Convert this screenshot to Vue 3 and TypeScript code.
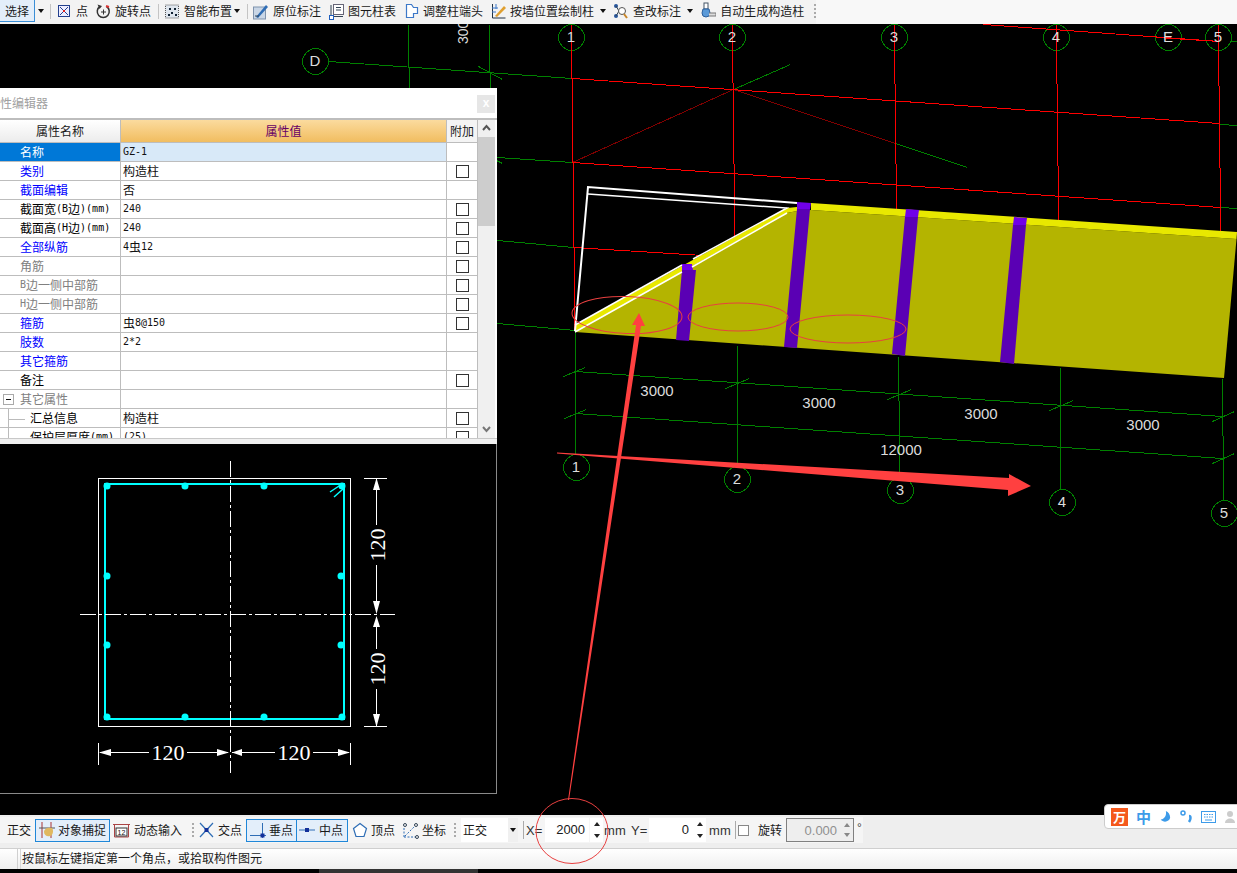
<script setup lang="ts">
type Seg = [number, number, number, number]

interface Row {
  name: string
  value?: string
  color?: 'blue' | 'gray' | 'white'
  check?: boolean
  selected?: boolean
  group?: boolean
  child?: boolean
}

const rows: Row[] = [
  { name: '名称', value: 'GZ-1', color: 'white', selected: true },
  { name: '类别', value: '构造柱', color: 'blue', check: true },
  { name: '截面编辑', value: '否', color: 'blue' },
  { name: '截面宽(B边)(mm)', value: '240', check: true },
  { name: '截面高(H边)(mm)', value: '240', check: true },
  { name: '全部纵筋', value: '4虫12', color: 'blue', check: true },
  { name: '角筋', color: 'gray', check: true },
  { name: 'B边一侧中部筋', color: 'gray', check: true },
  { name: 'H边一侧中部筋', color: 'gray', check: true },
  { name: '箍筋', value: '虫8@150', color: 'blue', check: true },
  { name: '肢数', value: '2*2', color: 'blue' },
  { name: '其它箍筋', color: 'blue' },
  { name: '备注', check: true },
  { name: '其它属性', color: 'gray', group: true },
  { name: '汇总信息', value: '构造柱', child: true, check: true },
  { name: '保护层厚度(mm)', value: '(25)', child: true, check: true },
]

function runs(s: string) {
  const out: { t: string; latin: boolean }[] = []
  for (const ch of s) {
    const latin = ch.charCodeAt(0) < 128
    const last = out[out.length - 1]
    if (last && last.latin === latin) last.t += ch
    else out.push({ t: ch, latin })
  }
  return out
}

function ring(cx: number, cy: number, r: number) {
  const pts: string[] = []
  for (let i = 0; i < 12; i++) {
    const a = (Math.PI * 2 * i) / 12 + 0.26
    pts.push(`${(cx + r * Math.cos(a)).toFixed(1)},${(cy + r * Math.sin(a)).toFixed(1)}`)
  }
  return pts.join(' ')
}

const bubbles = [
  { x: 315, y: 61, t: 'D' },
  { x: 571, y: 37, t: '1' },
  { x: 732, y: 37, t: '2' },
  { x: 894, y: 37, t: '3' },
  { x: 1056, y: 37, t: '4' },
  { x: 1168, y: 37, t: 'E' },
  { x: 1218, y: 37, t: '5' },
  { x: 576, y: 467, t: '1' },
  { x: 737, y: 479, t: '2' },
  { x: 900, y: 490, t: '3' },
  { x: 1062, y: 502, t: '4' },
  { x: 1224, y: 513, t: '5' },
]

const green: Seg[] = [
  [328, 61, 572, 78],
  [408, 24, 408, 67],
  [409, 67, 409, 88],
  [489, 24, 489, 72],
  [490, 72, 490, 88],
  [478, 66, 502, 79],
  [497, 157, 572, 162],
  [492, 158, 502, 163],
  [497, 240, 573, 247],
  [497, 323, 575, 330],
  [733, 89, 790, 64],
  [895, 143, 967, 167],
  [1219, 41, 1237, 41],
  [1219, 124, 1237, 125],
  [1220, 207, 1237, 208],
  [575, 331, 575, 454],
  [737, 345, 737, 466],
  [898, 356, 898, 400],
  [899, 400, 899, 477],
  [1060, 367, 1060, 489],
  [1222, 378, 1222, 435],
  [1223, 435, 1223, 500],
  [575, 371, 1222, 416],
  [575, 413, 1222, 458],
  [563, 376, 585, 367],
  [725, 388, 749, 378],
  [887, 399, 911, 389],
  [1049, 410, 1073, 400],
  [1212, 421, 1234, 411],
  [564, 418, 586, 409],
  [1212, 463, 1234, 453],
]

const red: Seg[] = [
  [572, 78, 1219, 123],
  [572, 162, 1220, 207],
  [573, 247, 703, 255],
  [983, 24, 1219, 41],
  [1156, 37, 1219, 41],
  [571, 24, 571, 78],
  [572, 78, 572, 162],
  [573, 162, 573, 247],
  [574, 247, 574, 330],
  [732, 24, 732, 82],
  [733, 82, 733, 163],
  [734, 163, 734, 240],
  [894, 24, 894, 83],
  [895, 83, 895, 163],
  [896, 163, 896, 210],
  [1056, 24, 1056, 83],
  [1057, 83, 1057, 165],
  [1058, 165, 1058, 220],
  [1218, 24, 1218, 85],
  [1219, 85, 1219, 167],
  [1220, 167, 1220, 231],
]

const dims = [
  { x: 657, y: 390, t: '3000' },
  { x: 819, y: 402, t: '3000' },
  { x: 981, y: 413, t: '3000' },
  { x: 1143, y: 424, t: '3000' },
  { x: 901, y: 449, t: '12000' },
]

const columns = [
  { top: '682,264 692,264 693,270 682,270', body: '682,270 696,270 689,341 676,340' },
  { top: '797,202 811,203 810,209 797,209', body: '797,209 810,209 797,348 784,347' },
  { top: '906,209 919,210 918,217 905,217', body: '905,217 918,217 905,356 892,354' },
  { top: '1014,217 1027,218 1026,225 1013,225', body: '1013,225 1026,225 1014,364 1000,362' },
]

const rebars: [number, number][] = [
  [107, 486], [185, 486], [264, 486], [342, 486],
  [107, 576], [341, 576], [107, 645], [341, 645],
  [107, 717], [185, 717], [264, 717], [342, 717],
]
</script>

<template>
  <div class="app">
    <!-- top toolbar -->
    <div class="tb">
      <div class="select">选择</div>
      <span class="caret c12"></span>
      <span class="sep s1"></span>
      <div class="it g6 m8">
        <svg width="12" height="14" viewBox="0 0 12 14"><rect x=".5" y="1.5" width="11" height="11" fill="#eef" stroke="#23408e"/><path d="M2 3l8 8M10 3l-8 8" stroke="#23408e"/><rect x="5" y="6" width="2" height="2" fill="#d22"/></svg>
        <span>点</span>
      </div>
      <div class="it g4">
        <svg width="15" height="16" viewBox="0 0 15 16"><path d="M4 3.500a6 6 0 1 0 6.500 0" fill="none" stroke="#333" stroke-width="1.500"/><path d="M1.500 1.500L6 3 3.500 6z" fill="#333"/><path d="M10 3l3 1" stroke="#d33" stroke-width="2"/><path d="M7.500 6.500v5M5 9h5" stroke="#333"/></svg>
        <span>旋转点</span>
      </div>
      <span class="sep s2"></span>
      <div class="it g5">
        <svg width="14" height="15" viewBox="0 0 14 15"><rect x=".5" y="1" width="13" height="13" fill="#dfe6ee" stroke="#555" stroke-dasharray="1 1"/><path d="M4 4h2v2H4zM9 4h2v2H9zM6 8h2v2H6zM3 10h2v2H3zM10 10h2v2h-2z" fill="#123"/></svg>
        <span>智能布置</span>
      </div>
      <span class="caret c10"></span>
      <span class="sep s3"></span>
      <div class="it g5 m8">
        <svg width="15" height="17" viewBox="0 0 15 17"><rect x=".5" y="4" width="12" height="12" fill="#c9d6e6" stroke="#7f93ad"/><path d="M3 14L13 2l2 2L5 15z" fill="#2f6db5"/><path d="M2 13h4" stroke="#345"/></svg>
        <span>原位标注</span>
      </div>
      <div class="it g4 m8">
        <svg width="15" height="17" viewBox="0 0 15 17"><rect x="4.500" y="1.500" width="10" height="10" fill="#fff" stroke="#667"/><path d="M7 4.500h5M7 7h5M4 13.500h10" stroke="#345"/><rect x=".5" y="12.500" width="4" height="4" fill="#fff" stroke="#1f5fbf"/><path d="M2 2v10" stroke="#345"/></svg>
        <span>图元柱表</span>
      </div>
      <div class="it g4 m8">
        <svg width="15" height="16" viewBox="0 0 15 16"><path d="M2.500 1.500h5l2 3h4v6h-4v4h-7z" fill="#fff" stroke="#3c78c8" stroke-width="1.200"/></svg>
        <span>调整柱端头</span>
      </div>
      <div class="it g4">
        <svg width="15" height="17" viewBox="0 0 15 17"><path d="M1.500 1v14h13" fill="none" stroke="#234"/><path d="M1 5h6M1 9h4M5 1v5" stroke="#3c78c8"/><path d="M4 13L13 3l2 2-9 9z" fill="#e0a030"/></svg>
        <span>按墙位置绘制柱</span>
      </div>
      <span class="caret c10 ml4"></span>
      <div class="it g5 ml5">
        <svg width="15" height="17" viewBox="0 0 15 17"><circle cx="3" cy="3" r="2" fill="#27569c"/><circle cx="3" cy="13" r="2" fill="#27569c"/><path d="M3 3l3 5-3 5" fill="none" stroke="#345"/><circle cx="9" cy="8" r="3.500" fill="#fff" stroke="#555"/><path d="M11 11l3 4" stroke="#c8862a" stroke-width="2"/></svg>
        <span>查改标注</span>
      </div>
      <span class="caret c10 ml4"></span>
      <div class="it g4 ml5">
        <svg width="16" height="18" viewBox="0 0 16 18"><rect x="4" y="1" width="4" height="6" fill="#fff" stroke="#456"/><path d="M3 7h6l1 4a4 4 0 1 1-8 0z" fill="#5b9ad8" stroke="#2b5f9c"/><path d="M9 11h7v3H9" fill="#ddd" stroke="#777"/></svg>
        <span>自动生成构造柱</span>
      </div>
      <span class="grip ml10"></span>
    </div>

    <!-- drawing area -->
    <div class="canvas">
      <svg class="model" width="1237" height="791" viewBox="0 24 1237 791">
        <g class="crisp" transform="translate(.5 .5)">
          <line v-for="(l, i) in green" :key="'g' + i" :x1="l[0]" :y1="l[1]" :x2="l[2]" :y2="l[3]" stroke="#008000" />
          <polygon v-for="b in bubbles" :key="b.t + b.y" :points="ring(b.x, b.y, 13)" fill="#000" stroke="#008000" />
          <line x1="572" y1="162" x2="733" y2="89" stroke="#7f0000" />
          <line x1="733" y1="89" x2="895" y2="143" stroke="#7f0000" />
          <line v-for="(l, i) in red" :key="'r' + i" :x1="l[0]" :y1="l[1]" :x2="l[2]" :y2="l[3]" stroke="#ff0000" />
        </g>
        <text v-for="b in bubbles" :key="'t' + b.t + b.y" class="cad" :x="b.x" :y="b.y + 5" text-anchor="middle" font-size="15">{{ b.t }}</text>
        <text class="cad" transform="translate(468 44) rotate(-90)" font-size="14">3000</text>
        <text v-for="d in dims" :key="d.x" class="cad" :x="d.x" :y="d.y + 6" text-anchor="middle" font-size="15">{{ d.t }}</text>

        <polygon points="575,332 787,213 797,211 811,210 1236.500,239 1224,378" fill="#b4b400" />
        <polygon points="811,203 1237,232 1236.500,239 811,210" fill="#e8e800" />
        <polygon points="575,325 787,208 797,207 797,211 787,213 575,332" fill="#e8e800" />
        <g v-for="(c, i) in columns" :key="i">
          <polygon :points="c.body" fill="#5a00b4" />
          <polygon :points="c.top" fill="#7000e8" />
        </g>
        <g fill="none" stroke="#fff" stroke-width="1.500">
          <polyline points="575,331 588,187 797,203" stroke-width="2" />
          <polyline points="575,325 682,265" />
          <polyline points="693,259 787,208 588,194" />
          <line x1="575" y1="332" x2="682" y2="272" />
          <line x1="692" y1="267" x2="787" y2="213" />
        </g>
      </svg>

      <!-- property editor window -->
      <div class="panel">
        <div class="title">
          <span class="title-text">属性编辑器</span>
          <span class="close">x</span>
        </div>
        <div class="sheet">
          <div class="grid">
            <div class="head h-name">属性名称</div>
            <div class="head h-value">属性值</div>
            <div class="head h-add">附加</div>
            <div class="body">
              <div v-for="r in rows" :key="r.name" class="row">
                <div class="c-name" :class="[r.color, { sel: r.selected, child: r.child, grp: r.group }]">
                  <span v-if="r.group" class="tree-box"></span>
                  <template v-if="r.child"><span class="tree-v"></span><span class="tree-h"></span></template>
                  <span v-for="(p, i) in runs(r.name)" :key="i" :class="{ latin: p.latin }">{{ p.t }}</span>
                </div>
                <div class="c-value" :class="{ sel: r.selected }">
                  <span v-for="(p, i) in runs(r.value ?? '')" :key="i" :class="{ latin: p.latin }">{{ p.t }}</span>
                </div>
                <div class="c-add"><span v-if="r.check" class="box"></span></div>
              </div>
            </div>
          </div>
          <div class="vscroll">
            <svg class="chev" width="17" height="17" viewBox="0 0 17 17"><path d="M5 10l3.500-4L12 10" fill="none" stroke="#555" stroke-width="2"/></svg>
            <div class="thumb"></div>
            <div class="track"></div>
            <svg class="chev" width="17" height="17" viewBox="0 0 17 17"><path d="M5 6l3.500 4L12 6" fill="none" stroke="#777" stroke-width="2"/></svg>
          </div>
        </div>
        <div class="foot"></div>
        <div class="preview">
          <svg width="496" height="349" viewBox="0 444 496 349">
            <rect x="98.500" y="478.500" width="252" height="248" fill="none" stroke="#fff" />
            <rect x="105" y="484" width="239" height="235" fill="none" stroke="#00ffff" stroke-width="2" />
            <circle v-for="(d, i) in rebars" :key="i" :cx="d[0]" :cy="d[1]" r="3.500" fill="#00ffff" />
            <path d="M330 492l9-6M334 497l9-8" stroke="#00ffff" stroke-width="1.500" />
            <g stroke="#fff" fill="none">
              <line x1="230.500" y1="461" x2="230.500" y2="773" stroke-dasharray="16 3 3 3" />
              <line x1="80" y1="614.500" x2="395" y2="614.500" stroke-dasharray="16 3 3 3" />
              <path d="M364 478.500h23M364 726.500h23M376.500 478v47M376.500 565v36M376.500 627v22M376.500 689v38" />
              <path d="M98.500 743v22M350.500 743v22M100 752.500h49M187 752.500h41M232 752.500h43M313 752.500h36" />
            </g>
            <g fill="#fff">
              <path d="M376.500 478l-3.500 12h7zM376.500 614l-3.500-13h7zM376.500 616l-3.500 11h7zM376.500 727l-3.500-13h7z" />
              <path d="M99 752.500l12-3.500v7zM229 752.500l-12-3.500v7zM232 752.500l10-3.500v7zM350 752.500l-12-3.500v7z" />
            </g>
            <g class="num" fill="#fff" font-size="22">
              <text x="168" y="760" text-anchor="middle">120</text>
              <text x="294" y="760" text-anchor="middle">120</text>
              <text transform="translate(385 545) rotate(-90)" text-anchor="middle">120</text>
              <text transform="translate(385 669) rotate(-90)" text-anchor="middle">120</text>
            </g>
          </svg>
        </div>
      </div>
    </div>

    <!-- lower toolbar -->
    <div class="bt">
      <div class="seg">
        <div class="it b-first"><span>正交</span></div>
        <div class="toggle snap">
          <svg width="16" height="18" viewBox="0 0 16 18"><path d="M3 1v16M12 1v16" stroke="#a33"/><path d="M0 7h16" stroke="#555"/><path d="M5 11c0-4 5-5 8-4 2 2 1 8-2 8-3 1-6-1-6-4z" fill="#e0b860"/></svg>
          <span>对象捕捉</span>
        </div>
        <div class="it g4 ml3">
          <svg width="17" height="16" viewBox="0 0 17 16"><path d="M0 2.500h17M1.500 2v13h14V2" fill="none" stroke="#a44"/><rect x="3" y="6" width="11" height="8" fill="#fff" stroke="#333"/><text x="8.500" y="13" text-anchor="middle" font-size="7" font-family="Liberation Sans" fill="#111">12</text></svg>
          <span>动态输入</span>
        </div>
        <span class="grip ml10"></span>
        <div class="it g4 ml5">
          <svg width="15" height="16" viewBox="0 0 15 16"><path d="M1 1l13 14M14 1L1 15" stroke="#2e6db5" stroke-width="1.200"/><rect x="5.500" y="6" width="4" height="4" fill="#13309a"/></svg>
          <span>交点</span>
        </div>
        <div class="toggle t-first ml4">
          <svg width="16" height="16" viewBox="0 0 16 16"><path d="M0 13.500h16M12.500 1v15" stroke="#2e6db5"/><rect x="10.500" y="11.500" width="4" height="4" fill="#13309a"/></svg>
          <span>垂点</span>
        </div>
        <div class="toggle t-second">
          <svg width="16" height="16" viewBox="0 0 16 16"><path d="M0 8h16" stroke="#2e6db5"/><rect x="6" y="6" width="4" height="4" fill="#13309a"/></svg>
          <span>中点</span>
        </div>
        <div class="it g3 ml4">
          <svg width="16" height="16" viewBox="0 0 16 16"><path d="M8 1.500l6.500 5-2.500 8H4l-2.500-8z" fill="#fff" stroke="#2e6db5" stroke-width="1.200"/></svg>
          <span>顶点</span>
        </div>
        <div class="it g3 ml7">
          <svg width="17" height="17" viewBox="0 0 17 17"><path d="M2 15L2 5M2 15h12M3 14l9-9" stroke="#2e6db5" stroke-dasharray="2 1.500"/><circle cx="3" cy="3" r="1.500" fill="none" stroke="#345"/><circle cx="14" cy="3" r="1.500" fill="none" stroke="#345"/><circle cx="15" cy="15" r="1.500" fill="none" stroke="#345"/></svg>
          <span>坐标</span>
        </div>
        <span class="grip ml8"></span>
        <div class="combo ml5"><span class="combo-text">正交</span><span class="combo-btn"><span class="caret c10"></span></span></div>
        <span class="vline ml5"></span>
        <span class="lbl w16 ml2">X=</span>
        <span class="num-in ml3">2000</span>
        <span class="spin ml1"><i class="up"></i><i class="dn"></i></span>
        <span class="lbl w23 ml1">mm</span>
        <span class="lbl w16 ml4">Y=</span>
        <span class="num-in ml2">0</span>
        <span class="spin"><i class="up"></i><i class="dn"></i></span>
        <span class="lbl w21 ml3">mm</span>
        <span class="vline ml5"></span>
        <span class="chk ml2"></span>
        <span class="it ml9">旋转</span>
        <div class="rot ml4">
          <span class="rot-val">0.000</span>
          <span class="spin gray"><i class="up"></i><i class="dn"></i></span>
        </div>
        <span class="deg">°</span>
      </div>
    </div>

    <!-- status bar -->
    <div class="status">
      <div class="st-cell"></div>
      <div class="st-msg">按鼠标左键指定第一个角点，或拾取构件图元</div>
    </div>
    <div class="tail"><span class="tail-dark"></span></div>

    <!-- hand-drawn annotations sit over everything -->
    <svg class="annot" width="1237" height="873" viewBox="0 0 1237 873">
      <g fill="none" stroke="#e84040">
        <ellipse cx="627" cy="315" rx="55" ry="18.500" transform="rotate(2 627 315)" />
        <ellipse cx="738" cy="317" rx="50" ry="14" />
        <ellipse cx="848" cy="329" rx="58" ry="14" />
        <ellipse cx="572" cy="831" rx="36" ry="32.500" />
      </g>
      <polygon points="568,800 636,325 632,325 639,313 645,326 641,326 569,800" fill="#ff4040" />
      <polygon points="557,452.500 1009,478 1009,474 1031,486 1008,496 1008,490 557,453.500" fill="#ff4040" />
    </svg>

    <!-- input-method bar -->
    <div class="ime">
      <span class="ime-logo">万</span>
      <span class="ime-zh">中</span>
      <svg width="12" height="16" viewBox="0 0 14 16"><path d="M8 1c1 5-1 9-6 10 3 4 10 3 11-2 0-4-2-7-5-8z" fill="#3d9be9"/></svg>
      <svg width="14" height="16" viewBox="0 0 14 16"><circle cx="4" cy="4" r="2" fill="none" stroke="#3d9be9" stroke-width="1.500"/><path d="M10 7c2 0 2 3 0 6" fill="none" stroke="#3d9be9" stroke-width="2.500"/></svg>
      <svg width="15" height="14" viewBox="0 0 15 14"><rect x=".5" y="1.500" width="14" height="11" fill="none" stroke="#3d9be9"/><path d="M3 4.500h9M3 7h9" stroke="#3d9be9" stroke-dasharray="1.500 1"/><path d="M4 10h7" stroke="#3d9be9"/></svg>
      <svg width="12" height="14" viewBox="0 0 12 14"><circle cx="6" cy="4" r="3" fill="#ccc"/><path d="M1 13c0-6 10-6 10 0z" fill="#ccc"/></svg>
    </div>
  </div>
</template>

<style scoped>
.app {
  position: relative;
  display: flex;
  flex-direction: column;
  width: 1237px;
  height: 873px;
  overflow: hidden;
  background: #000;
  color: #1a1a1a;
  font-family: "Noto Sans CJK SC", "Liberation Sans", sans-serif;
  font-size: 12px;
  line-height: 1;
}
.crisp { shape-rendering: crispEdges; }
.tb {
  display: flex;
  align-items: center;
  flex: none;
  box-sizing: border-box;
  height: 24px;
  padding-bottom: 2px;
  background: linear-gradient(90deg, #f3f3f3 0, #f3f3f3 816px, #f8f8f8 816px);
}
.it { display: flex; align-items: center; flex: none; white-space: nowrap; }
.g3 { gap: 3px; } .g4 { gap: 4px; } .g5 { gap: 5px; } .g6 { gap: 6px; }
.m8 { margin-right: 8px; }
.ml1 { margin-left: 1px; } .ml2 { margin-left: 2px; } .ml3 { margin-left: 3px; }
.ml4 { margin-left: 4px; } .ml5 { margin-left: 5px; } .ml7 { margin-left: 7px; }
.ml8 { margin-left: 8px; } .ml9 { margin-left: 9px; } .ml10 { margin-left: 10px; }
.select {
  display: flex;
  align-items: center;
  justify-content: center;
  box-sizing: border-box;
  width: 35px;
  height: 22px;
  background: #e3eefa;
  border: 1px solid #3a8ed6;
  border-left: 0;
  border-top: 0;
}
.caret { position: relative; display: inline-block; flex: none; height: 10px; }
.caret::after {
  content: "";
  position: absolute;
  top: 3px;
  left: 50%;
  margin-left: -3px;
  border: 3px solid transparent;
  border-top: 4px solid #111;
  border-bottom: 0;
}
.c12 { width: 11px; } .c10 { width: 10px; }
.sep { flex: none; width: 1px; height: 15px; background: #c4c4c4; }
.s1 { margin: 0 7px 0 4px; }
.s2 { margin: 0 6px 0 7px; }
.s3 { margin: 0 5px; }
.grip {
  flex: none;
  width: 2px;
  height: 15px;
  background: repeating-linear-gradient(180deg, #aaa 0 2px, transparent 2px 4px);
}
.canvas { position: relative; flex: none; height: 791px; overflow: hidden; background: #000; }
.model { position: absolute; left: 0; top: 0; }
.cad { fill: #dcdcdc; font-family: "Liberation Sans", sans-serif; }
.num { font-family: "Liberation Serif", serif; }

.panel {
  position: absolute;
  left: 0;
  top: 64px;
  display: flex;
  flex-direction: column;
  width: 497px;
}
.title { position: relative; flex: none; height: 30px; background: #fff; }
.title-text { position: absolute; left: -12px; top: 9px; color: #a0a0a0; }
.close {
  position: absolute;
  right: 2px;
  top: 7px;
  width: 18px;
  height: 18px;
  background: #e6e6e6;
  color: #fff;
  text-align: center;
  line-height: 17px;
  font-weight: 700;
  font-family: "Liberation Sans", sans-serif;
}
.sheet {
  display: flex;
  flex: none;
  height: 320px;
  box-sizing: border-box;
  border-top: 2px solid #bdbdbd;
  background: #fff;
}
.grid {
  display: grid;
  grid-template-columns: 121px 326px 31px;
  grid-template-rows: 23px 1fr;
  width: 478px;
  overflow: hidden;
  background: #fff;
}
.head {
  display: flex;
  align-items: center;
  justify-content: center;
  box-sizing: border-box;
  border-right: 1px solid #bdbdbd;
  border-bottom: 1px solid #bdbdbd;
  font-size: 12px;
}
.h-name { background: linear-gradient(180deg, #fff, #ececec); }
.h-value { background: linear-gradient(180deg, #fbdb9e, #f1bd60); color: #660066; }
.h-add { background: #f4f4f4; }
.body { grid-column: 1 / 4; overflow: hidden; }
.row {
  display: grid;
  grid-template-columns: 121px 326px 31px;
  height: 19px;
}
.row > div {
  display: flex;
  align-items: center;
  box-sizing: border-box;
  border-right: 1px solid #bdbdbd;
  border-bottom: 1px solid #bdbdbd;
  white-space: nowrap;
}
.c-name { position: relative; padding-left: 20px; color: #000; }
.c-name.child { padding-left: 30px; }
.c-name.blue { color: #0000ff; }
.c-name.gray { color: #808080; }
.c-name.white { color: #fff; }
.c-name.sel { background: #0078d7; }
.c-value { padding-left: 2px; color: #111; }
.c-value.sel { background: #d8e9f8; }
.c-add { justify-content: center; }
.latin { font-family: "DejaVu Sans Mono", monospace; font-size: 10px; }
.box { display: block; box-sizing: border-box; width: 13px; height: 13px; margin-left: 1px; border: 1px solid #333; background: #fff; }
.tree-box {
  position: absolute;
  left: 3px;
  top: 4px;
  box-sizing: border-box;
  width: 11px;
  height: 11px;
  border: 1px solid #aaa;
  background: linear-gradient(#111, #111) center / 5px 1px no-repeat #fff;
}
.tree-v { position: absolute; left: 8px; top: 0; width: 1px; height: 19px; background: #bbb; }
.tree-h { position: absolute; left: 8px; top: 10px; width: 17px; height: 1px; background: #bbb; }
.vscroll {
  display: flex;
  flex-direction: column;
  flex: none;
  width: 17px;
  background: #f0f0f0;
}
.chev { flex: none; }
.thumb { flex: none; height: 89px; background: #cdcdcd; }
.track { flex: 1; }
.foot {
  flex: none;
  height: 6px;
  box-sizing: border-box;
  border-top: 1px solid #c8c8c8;
  background: #f0f0f0;
}
.preview {
  flex: none;
  height: 350px;
  box-sizing: border-box;
  border-right: 1px solid #8a8a8a;
  border-bottom: 1px solid #8a8a8a;
  background: #000;
}
.preview svg { display: block; }

.bt {
  flex: none;
  height: 33px;
  box-sizing: border-box;
  padding-top: 2px;
  background: #eeeeee;
}
.seg {
  display: flex;
  align-items: center;
  width: 863px;
  height: 26px;
  background: #f5f5f5;
}
.b-first { padding-left: 7px; }
.toggle {
  display: flex;
  align-items: center;
  flex: none;
  box-sizing: border-box;
  height: 23px;
  background: #e3eefa;
  border: 1px solid #1f87d8;
}
.snap { gap: 3px; width: 75px; margin-left: 4px; padding-left: 3px; }
.t-first { gap: 3px; width: 51px; padding-left: 3px; }
.t-second { gap: 4px; width: 51px; padding-left: 2px; border-left: 0; }
.combo {
  display: flex;
  align-items: center;
  flex: none;
  width: 57px;
  height: 24px;
  background: #fff;
}
.combo-text { flex: 1; padding-left: 2px; }
.combo-btn { display: flex; align-items: center; width: 10px; height: 24px; background: #f0f0f0; }
.vline { flex: none; width: 1px; height: 18px; background: #aaa; }
.lbl { flex: none; font-family: "Liberation Sans", sans-serif; font-size: 13px; color: #333; }
.w16 { width: 16px; } .w21 { width: 21px; } .w23 { width: 23px; }
.num-in {
  flex: none;
  box-sizing: border-box;
  width: 44px;
  height: 24px;
  padding-right: 4px;
  background: #fff;
  font-family: "Liberation Sans", sans-serif;
  font-size: 13px;
  line-height: 24px;
  text-align: right;
}
.spin {
  display: flex;
  flex-direction: column;
  align-items: center;
  justify-content: space-around;
  flex: none;
  width: 13px;
  height: 24px;
  background: #fff;
}
.spin i { display: block; border: 3px solid transparent; }
.spin .up { border-top: 0; border-bottom: 4px solid #222; }
.spin .dn { border-bottom: 0; border-top: 4px solid #222; }
.spin.gray { height: 20px; background: transparent; }
.spin.gray .up { border-bottom-color: #888; }
.spin.gray .dn { border-top-color: #888; }
.chk { flex: none; box-sizing: border-box; width: 11px; height: 11px; border: 1px solid #888; background: #fff; }
.rot {
  display: flex;
  align-items: center;
  flex: none;
  box-sizing: border-box;
  width: 68px;
  height: 24px;
  border: 1px solid #808080;
  background: #eeeeee;
}
.rot-val {
  flex: 1;
  padding-right: 3px;
  color: #909090;
  font-family: "Liberation Sans", sans-serif;
  font-size: 13px;
  text-align: right;
}
.deg { margin: -4px 0 0 3px; font-family: "Liberation Sans", sans-serif; color: #444; }

.status {
  display: flex;
  flex: none;
  height: 21px;
  box-sizing: border-box;
  border-top: 1px solid #cfcfcf;
  background: linear-gradient(180deg, #fff, #efefef);
}
.st-cell { flex: none; width: 17px; border-right: 1px solid #d0d0d0; }
.st-msg {
  flex: 1;
  margin-left: 2px;
  padding: 3px 0 0 1px;
  border-left: 1px solid #d8d8d8;
}
.tail { display: flex; flex: none; height: 4px; background: #000; }
.tail-dark { width: 159px; margin-left: 319px; background: #333; }

.annot { position: absolute; left: 0; top: 0; pointer-events: none; }
.ime {
  position: absolute;
  left: 1104px;
  top: 804px;
  display: flex;
  align-items: center;
  gap: 8px;
  box-sizing: border-box;
  width: 140px;
  height: 25px;
  padding-left: 6px;
  background: #fff;
  border: 1px solid #ccc;
  border-radius: 4px;
}
.ime-logo {
  display: flex;
  align-items: center;
  justify-content: center;
  width: 17px;
  height: 18px;
  background: #f4581c;
  color: #fff;
  font-weight: 700;
  font-size: 13px;
}
.ime-zh { color: #3d9be9; font-size: 15px; font-weight: 700; }
</style>

<style>
body { margin: 0; background: #000; }
</style>
